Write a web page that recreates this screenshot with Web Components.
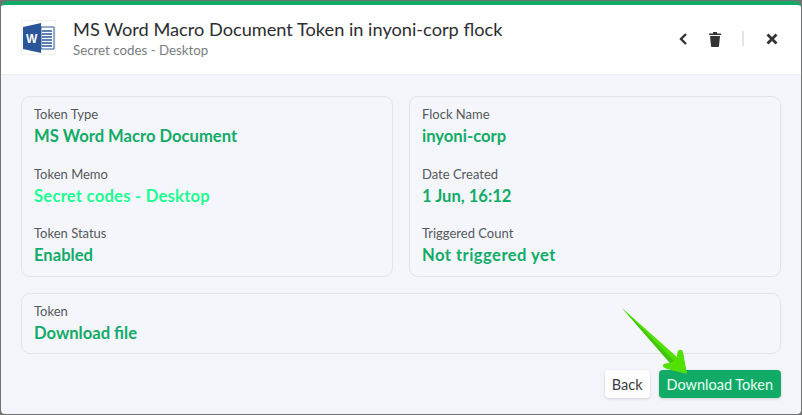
<!DOCTYPE html>
<html>
<head>
<meta charset="utf-8">
<style>
html, body { margin: 0; padding: 0; width: 802px; height: 415px; overflow: hidden; background: #6f7371; }
body { font-family: Lato, "Noto Sans", sans-serif; }
</style>
</head>
<body>
<token-modal>
    <modal-header slot="header" heading="MS Word Macro Document Token in inyoni-corp flock" sub="Secret codes - Desktop"></modal-header>
    <div slot="cards" style="display:grid;grid-template-columns:372px 372px;grid-auto-rows:181px;gap:16px">
        <info-card>
            <info-item label="Token Type" value="MS Word Macro Document"></info-item>
            <info-item label="Token Memo" value="Secret codes - Desktop" accent style="--track:.24px"></info-item>
            <info-item label="Token Status" value="Enabled"></info-item>
        </info-card>
        <info-card>
            <info-item label="Flock Name" value="inyoni-corp"></info-item>
            <info-item label="Date Created" value="1 Jun, 16:12"></info-item>
            <info-item label="Triggered Count" value="Not triggered yet" style="--track:.45px"></info-item>
        </info-card>
    </div>
    <info-card slot="wide">
        <info-item label="Token" value="Download file"></info-item>
    </info-card>
    <modal-button slot="actions" style="--pad:7px">Back</modal-button>
    <modal-button slot="actions" primary>Download Token</modal-button>
</token-modal>

<script>
class TokenModal extends HTMLElement {
    constructor() {
        super();
        this.attachShadow({mode: 'open'}).innerHTML = `
            <style>
                :host { display: block; position: relative; box-sizing: border-box; width: 800px; height: 413px; margin: 1px 0 0 1px; }
                .shell { display: flex; flex-direction: column; height: 100%; box-sizing: border-box; border-top: 4px solid #11ab67; border-radius: 6px 6px 4px 4px; background: #f3f5fa; overflow: hidden; }
                .body { display: flex; flex-direction: column; gap: 16px; padding: 21px 20px 0 20px; }
                .actions { display: flex; justify-content: flex-end; gap: 9px; }
                svg { position: absolute; left: 614px; top: 302px; pointer-events: none; }
            </style>
            <div class="shell">
                <slot name="header"></slot>
                <div class="body">
                    <slot name="cards"></slot>
                    <slot name="wide"></slot>
                    <div class="actions"><slot name="actions"></slot></div>
                </div>
            </div>
            <svg width="80" height="76" viewBox="0 0 80 76">
                <path d="M7 5 L62 54 Q62 48 64 47 Q67 46 68 49 L72 71 L52 66 Q47 64 48 62 Q49 60 55 60 Z" fill="#52e000"/>
                <path d="M7 5 L55 60 L59 58 Z" fill="#3fc40a"/>
            </svg>
        `;
    }
}

class ModalHeader extends HTMLElement {
    constructor() {
        super();
        this.attachShadow({mode: 'open'}).innerHTML = `
            <style>
                :host { display: flex; flex: none; align-items: center; height: 70px; box-sizing: border-box; padding: 0 20px; background: #fff; border-bottom: 1px solid #eceef2; color: #2b2d30; }
                .logo { width: 35px; height: 35px; flex: none; box-sizing: border-box; border: 1px solid #f0f0f0; margin-right: 17px; margin-top: -5px; }
                .text { flex: 1; margin-top: -3px; }
                h1 { margin: 0; font-size: 18.2px; line-height: 24px; font-weight: 400; color: #2b2d30; }
                p { margin: 0; font-size: 13.3px; line-height: 19px; color: #7a7d82; }
                .tools { display: flex; align-items: center; margin-top: -2px; margin-right: 3px; color: #333; }
                .tools svg { display: block; }
                .rule { width: 2px; height: 15px; background: #e3e4e6; margin: 0 22px 0 20px; }
            </style>
            <svg class="logo" viewBox="0 0 33 33">
                <path d="M19 6 H32 V28 H19 Z" fill="#fff" stroke="#2a5699" stroke-width="1"/>
                <path d="M20 10h10M20 13h10M20 16h10M20 19h10M20 22h10M20 25h10" stroke="#2a5699" stroke-width="1.4"/>
                <path d="M1 6 L19 2 V32 L1 28 Z" fill="#2a5699"/>
                <text x="4" y="22" font-family="Liberation Sans" font-weight="700" font-size="12" fill="#fff">W</text>
            </svg>
            <div class="text">
                <h1>${this.getAttribute('heading')}</h1>
                <p>${this.getAttribute('sub')}</p>
            </div>
            <div class="tools">
                <svg width="10" height="14" viewBox="0 0 10 14" style="margin-right:20px"><path d="M8 2 L3 7 L8 12" fill="none" stroke="#333" stroke-width="2.400"/></svg>
                <svg width="14" height="16" viewBox="0 0 14 16"><path d="M1 2.500 H5 V1 H9 V2.500 H13 V4 H1 Z M2 5 H12 L11 15 Q11 16 10 16 H4 Q3 16 3 15 Z" fill="#333"/></svg>
                <span class="rule"></span>
                <svg width="12" height="12" viewBox="0 0 12 12"><path d="M1.500 1.500 L10.500 10.500 M10.500 1.500 L1.500 10.500" stroke="#333" stroke-width="2.800"/></svg>
            </div>
        `;
    }
}

class InfoCard extends HTMLElement {
    constructor() {
        super();
        this.attachShadow({mode: 'open'}).innerHTML = `
            <style>
                :host { display: flex; flex-direction: column; gap: 16.5px; box-sizing: border-box; padding: 8px 12px 8px 12px; border: 1px solid #e1e3e8; border-radius: 9px; background: #f4f6fb; }
            </style>
            <slot></slot>
        `;
    }
}

class InfoItem extends HTMLElement {
    constructor() {
        super();
        this.attachShadow({mode: 'open'}).innerHTML = `
            <style>
                :host { display: block; }
                .label { font-size: 13px; line-height: 18px; color: #55585c; }
                .value { margin-top: 1px; font-size: 16.6px; line-height: 24px; font-weight: 700; letter-spacing: var(--track, 0); color: ${this.hasAttribute('accent') ? '#1dfb93' : '#11ab67'}; }
            </style>
            <div class="label">${this.getAttribute('label')}</div>
            <div class="value">${this.getAttribute('value')}</div>
        `;
    }
}

class ModalButton extends HTMLElement {
    constructor() {
        super();
        const primary = this.hasAttribute('primary');
        this.attachShadow({mode: 'open'}).innerHTML = `
            <style>
                :host { display: inline-flex; align-items: center; height: 28px; box-sizing: border-box; padding: 0 var(--pad, 8px); border-radius: 4px; font-size: 14.5px; background: ${primary ? '#11ab67' : '#fff'}; color: ${primary ? '#eafff4' : '#3a3c40'}; box-shadow: 0 1px 3px rgba(0,0,0,.15); }
            </style>
            <slot></slot>
        `;
    }
}

customElements.define('token-modal', TokenModal);
customElements.define('modal-header', ModalHeader);
customElements.define('info-card', InfoCard);
customElements.define('info-item', InfoItem);
customElements.define('modal-button', ModalButton);
</script>
</body>
</html>
